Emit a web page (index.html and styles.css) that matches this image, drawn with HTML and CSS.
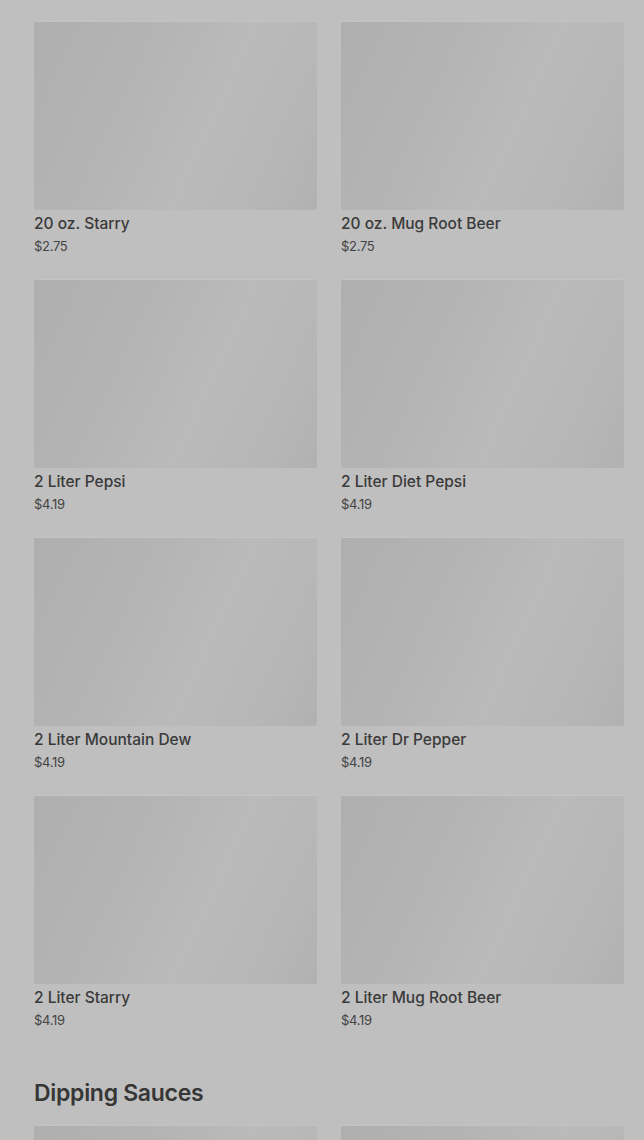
FILE: index.html
```html
<!DOCTYPE html>
<html lang="en">
<head>
    <meta charset="UTF-8">
    <meta name="viewport" content="width=device-width, initial-scale=1.0">
    <title>Menu</title>
    <link rel="stylesheet" href="styles.css">
</head>
<body>
    <!-- Drinks -->
    <div class="menu-grid">
        <div class="item">
            <div class="item-image"></div>
            <div class="item-name">20 oz. Starry</div>
            <div class="item-price">$2.75</div>
        </div>
        <div class="item">
            <div class="item-image"></div>
            <div class="item-name">20 oz. Mug Root Beer</div>
            <div class="item-price">$2.75</div>
        </div>
        <div class="item">
            <div class="item-image"></div>
            <div class="item-name">2 Liter Pepsi</div>
            <div class="item-price">$4.19</div>
        </div>
        <div class="item">
            <div class="item-image"></div>
            <div class="item-name">2 Liter Diet Pepsi</div>
            <div class="item-price">$4.19</div>
        </div>
        <div class="item">
            <div class="item-image"></div>
            <div class="item-name">2 Liter Mountain Dew</div>
            <div class="item-price">$4.19</div>
        </div>
        <div class="item">
            <div class="item-image"></div>
            <div class="item-name">2 Liter Dr Pepper</div>
            <div class="item-price">$4.19</div>
        </div>
        <div class="item">
            <div class="item-image"></div>
            <div class="item-name">2 Liter Starry</div>
            <div class="item-price">$4.19</div>
        </div>
        <div class="item">
            <div class="item-image"></div>
            <div class="item-name">2 Liter Mug Root Beer</div>
            <div class="item-price">$4.19</div>
        </div>
    </div>

    <!-- Dipping Sauces -->
    <h2 class="section-title">Dipping Sauces</h2>
    <div class="menu-grid">
        <div class="item">
            <div class="item-image"></div>
        </div>
        <div class="item">
            <div class="item-image"></div>
        </div>
    </div>
</body>
</html>
```

FILE: styles.css
```css
/* General */
body {
    margin: 0;
    padding: 22px 20px 0 34px;
    font-family: Inter, "Liberation Sans", sans-serif;
    background-color: #bfbfbf;
    color: #383838;
    overflow: hidden;
}

/* Grid */
.menu-grid {
    display: grid;
    grid-template-columns: 1fr 1fr;
    column-gap: 24px;
    row-gap: 24px;
}

/* Item Card */
.item-image {
    height: 188px;
    border-radius: 2px;
    background: linear-gradient(115deg, #afafaf 0%, #b4b4b4 35%, #bababa 60%, #b6b6b6 85%, #b1b1b1 100%);
    box-shadow: 0 -1px 0 #c4c4c4;
}

.item-name {
    margin-top: 3px;
    font-size: 15.5px;
    line-height: 22px;
    font-weight: 500;
    color: #3a3a3a;
}

.item-price {
    margin-top: 1px;
    font-size: 13px;
    line-height: 20px;
    letter-spacing: -0.3px;
    color: #444444;
}

/* Section Heading */
.section-title {
    margin: 49px 0 19px;
    font-size: 23px;
    line-height: 28px;
    font-weight: 600;
    letter-spacing: -0.3px;
    color: #363636;
}
```
